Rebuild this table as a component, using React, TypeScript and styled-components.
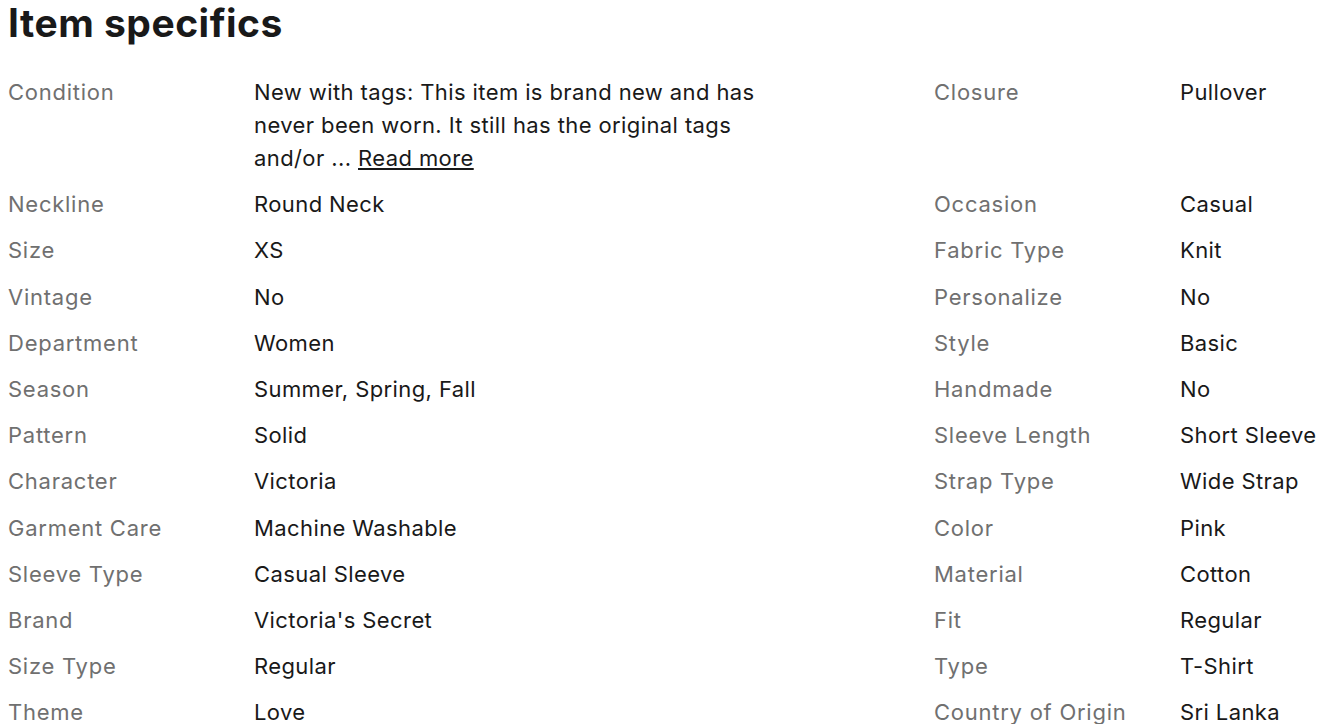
import React from 'react';
import styled, {createGlobalStyle} from 'styled-components';

const GlobalStyle = createGlobalStyle`
  body {
    margin: 0;
    background: #ffffff;
    font-family: Inter, "Open Sans", sans-serif;
    color: #191919;
  }
`

const Section = styled.section`
  padding: 0 0 0 8px;
  overflow: hidden;
  height: 724px;
`

const Title = styled.h2`
  margin: 0;
  font-size: 39px;
  line-height: 46px;
  font-weight: 700;
  letter-spacing: 0.5px;
  color: #191919;
`

const SpecGrid = styled.div`
  display: grid;
  grid-template-columns: 246px 680px 246px 1fr;
  row-gap: 13.2px;
  margin-top: 30px;
  font-size: 22px;
  line-height: 33px;
`

const Label = styled.div`
  color: #707070;
  white-space: nowrap;
  letter-spacing: 0.75px;
`

const Value = styled.div<{ $wrap?: boolean }>`
  color: #191919;
  max-width: 520px;
  letter-spacing: 0.4px;
  white-space: ${p => p.$wrap ? 'normal' : 'nowrap'};
`

const ReadMore = styled.a`
  color: #191919;
  text-decoration: underline;
  text-underline-offset: 2px;
`

type Spec = [string, React.ReactNode]

const rows: [Spec, Spec][] = [
  [
    ['Condition', <>New with tags: This item is brand new and has never been worn. It still has the original tags and/or ... <ReadMore href="#">Read more</ReadMore></>],
    ['Closure', 'Pullover'],
  ],
  [['Neckline', 'Round Neck'], ['Occasion', 'Casual']],
  [['Size', 'XS'], ['Fabric Type', 'Knit']],
  [['Vintage', 'No'], ['Personalize', 'No']],
  [['Department', 'Women'], ['Style', 'Basic']],
  [['Season', 'Summer, Spring, Fall'], ['Handmade', 'No']],
  [['Pattern', 'Solid'], ['Sleeve Length', 'Short Sleeve']],
  [['Character', 'Victoria'], ['Strap Type', 'Wide Strap']],
  [['Garment Care', 'Machine Washable'], ['Color', 'Pink']],
  [['Sleeve Type', 'Casual Sleeve'], ['Material', 'Cotton']],
  [['Brand', "Victoria's Secret"], ['Fit', 'Regular']],
  [['Size Type', 'Regular'], ['Type', 'T-Shirt']],
  [['Theme', 'Love'], ['Country of Origin', 'Sri Lanka']],
]

const App: React.FC = () => {
  return (
    <>
      <GlobalStyle/>
      <Section>
        <Title>Item specifics</Title>
        <SpecGrid>
          {rows.map((row, i) => (
            <React.Fragment key={i}>
              {row.map(([label, value]) => (
                <React.Fragment key={label}>
                  <Label>{label}</Label>
                  <Value $wrap={label === 'Condition'}>{value}</Value>
                </React.Fragment>
              ))}
            </React.Fragment>
          ))}
        </SpecGrid>
      </Section>
    </>
  );
};

export default App;
